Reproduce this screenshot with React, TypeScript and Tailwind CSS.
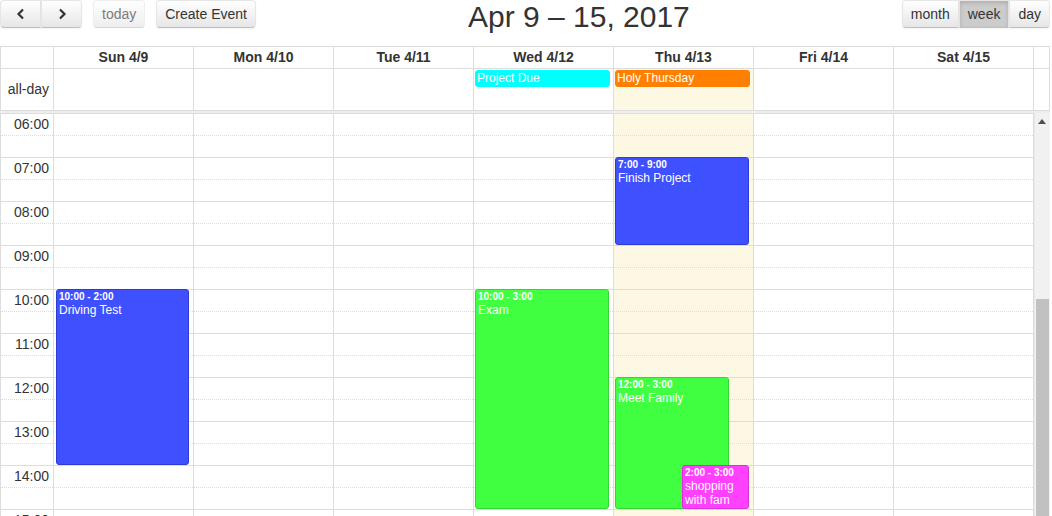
import React from 'react';

type TimedEvent = {
  day: number;
  start: number;
  end: number;
  time: string;
  title: string;
  left: number;
  width: number;
  color: string;
};

const days = ['Sun 4/9', 'Mon 4/10', 'Tue 4/11', 'Wed 4/12', 'Thu 4/13', 'Fri 4/14', 'Sat 4/15'];
const todayIdx = 4;
const hours = [6, 7, 8, 9, 10, 11, 12, 13, 14, 15];
const firstHour = 6;
const hourPx = 44;

const events: TimedEvent[] = [
  { day: 0, start: 10, end: 14, time: '10:00 - 2:00', title: 'Driving Test', left: 2, width: 133, color: 'bg-[#3f51ff] border-[#2b3bd6]' },
  { day: 3, start: 10, end: 15, time: '10:00 - 3:00', title: 'Exam', left: 1, width: 134, color: 'bg-[#40ff40] border-[#33d633]' },
  { day: 4, start: 7, end: 9, time: '7:00 - 9:00', title: 'Finish Project', left: 1, width: 134, color: 'bg-[#3f51ff] border-[#2b3bd6]' },
  { day: 4, start: 12, end: 15, time: '12:00 - 3:00', title: 'Meet Family', left: 1, width: 114, color: 'bg-[#40ff40] border-[#33d633]' },
  { day: 4, start: 14, end: 15, time: '2:00 - 3:00', title: 'shopping with fam', left: 68, width: 67, color: 'bg-[#ff40ff] border-[#d633d6]' },
];

const allDay = [
  { day: 3, title: 'Project Due', color: 'bg-[#00ffff] border-[#00ffff]' },
  { day: 4, title: 'Holy Thursday', color: 'bg-[#ff8000] border-[#ff8000]' },
];

const btn =
  'h-[28px] px-[8px] border border-[#e6e6e6] border-b-[#bfbfbf] text-[14px] text-[#333] leading-none bg-linear-to-b from-white to-[#e6e6e6] shadow-[inset_0_1px_0_rgba(255,255,255,0.2),0_1px_2px_rgba(0,0,0,0.05)]';

function Chevron({ dir }: { dir: 'left' | 'right' }) {
  return (
    <svg width="10" height="12" viewBox="0 0 10 12" className="mx-auto">
      <path
        d={dir === 'left' ? 'M7 1.5 L2.5 6 L7 10.5' : 'M3 1.5 L7.5 6 L3 10.5'}
        fill="none"
        stroke="#333"
        strokeWidth="2.2"
      />
    </svg>
  );
}

function Slats() {
  return (
    <>
      {hours.map((h) => (
        <div key={h} className="h-[44px] border-t border-[#ddd]">
          <div className="h-[22px] border-b border-dotted border-[#ddd]" />
        </div>
      ))}
    </>
  );
}

export default function App() {
  return (
    <div className="w-[1050px] h-[516px] overflow-hidden bg-white text-[14px] text-[#333] font-['Liberation_Sans',Arial,Helvetica,sans-serif]">
      {/* toolbar */}
      <div className="flex items-start h-[46px]">
        <div className="flex">
          <div className="flex">
            <button className={`${btn} w-[41px] rounded-l-[4px]`}>
              <Chevron dir="left" />
            </button>
            <button className={`${btn} w-[41px] rounded-r-[4px] border-l-[#e6e6e6]`}>
              <Chevron dir="right" />
            </button>
          </div>
          <button className={`${btn} ml-[11px] rounded-[4px] opacity-65 shadow-none`}>today</button>
          <button className={`${btn} ml-[11px] rounded-[4px]`}>Create Event</button>
        </div>
        <div className="flex-1 text-center">
          <h2 className="text-[30px] leading-[33px] font-normal">Apr 9 – 15, 2017</h2>
        </div>
        <div className="flex">
          <button className={`${btn} rounded-l-[4px]`}>month</button>
          <button className={`${btn} bg-none bg-[#ccc] shadow-[inset_0_2px_4px_rgba(0,0,0,0.15),0_1px_2px_rgba(0,0,0,0.05)]`}>week</button>
          <button className={`${btn} rounded-r-[4px]`}>day</button>
        </div>
      </div>

      {/* day header */}
      <div className="flex border-t border-b border-[#ddd] h-[23px]">
        <div className="w-[54px] shrink-0 border-l border-r border-[#ddd]" />
        {days.map((d) => (
          <div key={d} className="w-[140px] shrink-0 border-r border-[#ddd] text-center font-bold leading-[21px]">
            {d}
          </div>
        ))}
        <div className="w-[16px] shrink-0 border-r border-[#ddd]" />
      </div>

      {/* all-day row */}
      <div className="flex h-[41px]">
        <div className="w-[54px] shrink-0 border-l border-r border-[#ddd] flex items-center justify-end pr-[4px]">
          all-day
        </div>
        {days.map((d, i) => {
          const ev = allDay.find((a) => a.day === i);
          return (
            <div
              key={d}
              className={`w-[140px] shrink-0 border-r border-[#ddd] pt-[1px] pl-[1px] pr-[3px] ${i === todayIdx ? 'bg-[#fcf8e3]' : ''}`}
            >
              {ev && (
                <div className={`h-[17px] rounded-[3px] border ${ev.color} text-white text-[12px] leading-[15px] px-[1px]`}>
                  {ev.title}
                </div>
              )}
            </div>
          );
        })}
        <div className="w-[16px] shrink-0 border-r border-[#ddd]" />
      </div>

      {/* divider */}
      <div className="h-[3px] border-t border-[#ddd] bg-[#eee]" />

      {/* time grid */}
      <div className="flex h-[403px] overflow-hidden">
        <div className="w-[54px] shrink-0 border-l border-r border-[#ddd]">
          {hours.map((h) => (
            <div key={h} className="h-[44px] border-t border-[#ddd]">
              <div className="h-[22px] border-b border-dotted border-[#ddd] text-right pr-[4px] leading-[21px]">
                {String(h).padStart(2, '0')}:00
              </div>
            </div>
          ))}
        </div>
        {days.map((d, i) => (
          <div
            key={d}
            className={`relative w-[140px] shrink-0 border-r border-[#ddd] ${i === todayIdx ? 'bg-[#fcf8e3]' : ''}`}
          >
            <Slats />
            {events
              .filter((e) => e.day === i)
              .map((e) => (
                <div
                  key={e.title}
                  className={`absolute rounded-[3px] border ${e.color} text-white px-[2px] overflow-hidden`}
                  style={{
                    top: (e.start - firstHour) * hourPx,
                    height: (e.end - e.start) * hourPx,
                    left: e.left,
                    width: e.width,
                  }}
                >
                  <div className="text-[10px] font-bold leading-[13px] whitespace-nowrap">{e.time}</div>
                  <div className="text-[12px] leading-[14px]">{e.title}</div>
                </div>
              ))}
          </div>
        ))}
        {/* scrollbar */}
        <div className="relative w-[16px] shrink-0 bg-[#f1f1f1] border-l border-[#e8e8e8]">
          <svg width="8" height="5" viewBox="0 0 8 5" className="absolute left-[3px] top-[6px]">
            <path d="M0 5 L4 0 L8 5 Z" fill="#505050" />
          </svg>
          <div className="absolute left-[1px] w-[13px] top-[186px] bottom-0 bg-[#c1c1c1]" />
        </div>
      </div>
    </div>
  );
}
